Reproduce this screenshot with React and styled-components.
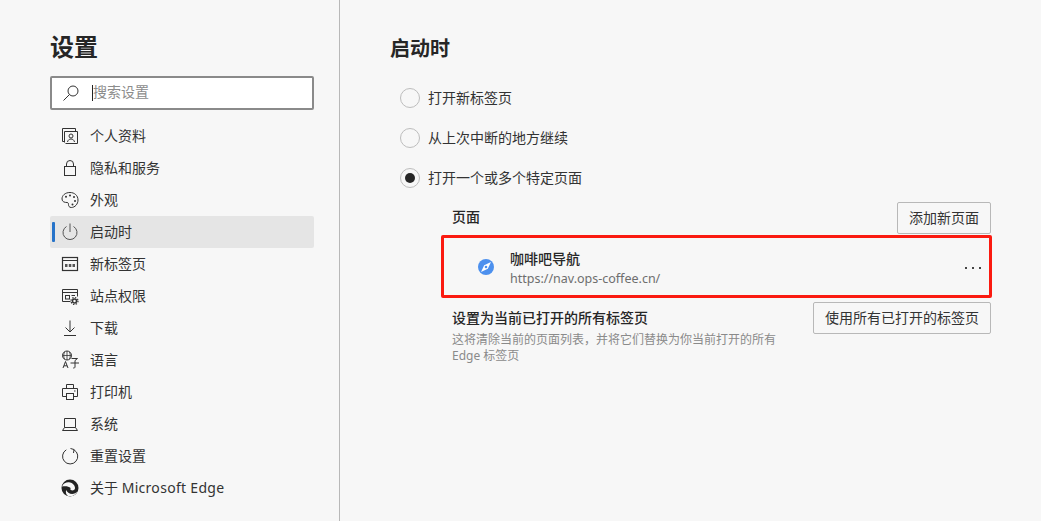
import React from "react";
import styled, { createGlobalStyle } from "styled-components";

const Global = createGlobalStyle`
  html, body { margin: 0; padding: 0; background: #f7f7f7; }
  body { font-family: "Noto Sans", "Noto Sans CJK SC", sans-serif; color: #262626; }
  * { box-sizing: border-box; }
`;
const CJK = `"Noto Sans", "Noto Sans CJK SC", sans-serif`;

const Page = styled.div`
  display: grid; grid-template-columns: 340px 1fr; width: 1041px; height: 521px; overflow: hidden; background: #f7f7f7;
`;
const Sidebar = styled.aside`
  border-right: 1px solid #b8b8b8; padding: 31px 25px 0 50px; height: 521px;
`;
const SideTitle = styled.h1`
  margin: 0; font: 700 24px/32px ${CJK}; color: #262626;
`;
const Search = styled.div`
  margin-top: 13px; height: 34px; border: 2px solid #8a8a8a; border-radius: 2px; background: #fff;
  display: flex; align-items: center; padding-left: 10px;
`;
const Caret = styled.span`
  width: 1px; height: 16px; background: #222; margin-left: 10px;
`;
const Placeholder = styled.span`
  font: 400 14px/20px ${CJK}; color: #8c8c8c; margin-top: -2px;
`;
const Nav = styled.nav` margin-top: 10px; `;
const NavItem = styled.div`
  position: relative; height: 32px; display: flex; align-items: center; padding-left: 10px; gap: 10px;
  border-radius: 2px; background: ${p => (p.$active ? "#e5e5e5" : "transparent")};
  font: 400 14px/20px ${CJK}; color: #333;
`;
const ActiveBar = styled.span`
  position: absolute; left: 2px; top: 6px; width: 3px; height: 20px; background: #2673c9; border-radius: 1px;
`;
const Latin = styled.span` letter-spacing: 0.3px; white-space: pre; `;
const Main = styled.main` padding: 35px 50px 0; `;
const MainTitle = styled.h2` margin: 0; font: 700 20px/28px ${CJK}; color: #262626; `;
const Options = styled.div` margin-top: 15px; padding-left: 10px; `;
const Option = styled.div`
  height: 40px; display: flex; align-items: center; gap: 8px; font: 400 14px/20px ${CJK}; color: #333;
`;
const Radio = styled.span`
  width: 20px; height: 20px; border-radius: 50%; border: 1px solid #bdbdbd; background: #f7f7f7;
  display: flex; align-items: center; justify-content: center;
`;
const Dot = styled.span` width: 10px; height: 10px; border-radius: 50%; background: #262626; `;
const Section = styled.section` margin-top: 4px; padding-left: 62px; `;
const Row = styled.div` display: flex; justify-content: space-between; align-items: ${p => p.$top ? "flex-start" : "center"}; `;
const Label = styled.div` font: 500 14px/20px ${CJK}; color: #262626; `;
const PagesLabel = styled(Label)` margin-top: -2px; `;
const Button = styled.button`
  height: 32px; padding: 0 11px; border: 1px solid #b8b8b8; border-radius: 2px; background: #f7f7f7;
  font: 400 14px/20px ${CJK}; color: #333; white-space: nowrap;
`;
const Highlight = styled.div`
  margin: 1px -1px 4px -11px; height: 63px; border: 3px solid #fb1a10; border-radius: 2px;
  display: flex; align-items: center; padding: 0 8px 0 33px;
`;
const SiteIcon = styled.svg` display: block; margin-top: 1px; flex: none; `;
const SiteText = styled.div` margin-left: 15px; flex: 1; margin-top: 4px; `;
const SiteName = styled.div` font: 500 14px/18px ${CJK}; color: #262626; `;
const SiteUrl = styled.div` font: 400 12.5px/18px ${CJK}; color: #6e6e6e; padding-top: 2px; `;
const More = styled.svg` display: block; margin-top: 2px; `;
const OpenText = styled.div` padding-top: 6px; `;
const Desc = styled.div` margin-top: 4px; width: 336px; font: 400 12px/16px ${CJK}; color: #8a8a8a; `;

const Svg = ({ children }) => (
  <svg width="20" height="20" viewBox="0 0 20 20" fill="none" stroke="#333" strokeWidth="1" style={{ flex: "none" }}>
    {children}
  </svg>
);

const icons = {
  profile: <Svg><path d="M4.5 16.5V5.500H17.500V17.500H5.500" /><path d="M2.500 2.500H15.500V5.500M2.500 2.500V15.500H4.500" /><circle cx="11" cy="10" r="2" /><path d="M7.500 16c.4-2 1.800-3 3.500-3s3.100 1 3.500 3" /></Svg>,
  lock: <Svg><rect x="4.500" y="8.500" width="11" height="9" /><path d="M6.500 8.500V6a3.500 3.500 0 0 1 7 0v2.500" /></Svg>,
  palette: <Svg><path d="M10 2.500C5 2.500 2 5.500 2 9c0 3 3 3.500 5 3.500 1.500 0 1.500 1.200 1.500 2.200 0 1.300 .7 2.800 2.800 2.800C15 17.500 18 14 18 10c0-4.500-3.500-7.500-8-7.500Z" /><g fill="#333" stroke="none"><circle cx="6" cy="6.800" r="1" /><circle cx="10" cy="5.500" r="1" /><circle cx="14" cy="7" r="1" /><circle cx="15" cy="11" r="1" /><circle cx="12.500" cy="14.500" r="1" /></g></Svg>,
  power: <Svg><path d="M6.500 4.500a7 7 0 1 0 7 0" stroke="#555" /><path d="M10 1.500v8.500" stroke="#555" /></Svg>,
  tab: <Svg><rect x="2.500" y="3.500" width="15" height="13" strokeWidth="1.200" /><path d="M2.500 6.500H17.500" /><g fill="#555" stroke="none"><rect x="5" y="10" width="2.500" height="3" /><rect x="8.800" y="10" width="2.500" height="3" /><rect x="12.500" y="10" width="2.500" height="3" /></g></Svg>,
  site: <Svg><path d="M10.500 15.500H2.500V3.500H17.500V10.500" /><path d="M2.500 6.500H17.500" /><rect x="5.500" y="9.500" width="4" height="3.500" /><path d="M11.500 9.500H15" /><circle cx="14.500" cy="15" r="2" strokeWidth="1.500" /><circle cx="14.500" cy="15" r="3.500" strokeDasharray="1.400 1.350" strokeWidth="1.200" /></Svg>,
  download: <Svg><path d="M10 2.500V14M5.500 9.500 10 14l4.500-4.500M4 17.500H16" /></Svg>,
  lang: (
    <Svg>
      <circle cx="7" cy="5.500" r="4.500" /><path d="M2.500 5.500H11.500M7 1V10M4.500 2C3.500 4.500 3.500 7 4.500 9M9.500 2C10.500 4.500 10.500 7 9.500 9" strokeWidth=".8" />
      <path d="M3 18 5.500 11.500 8 18M4 15.800H7" /><path d="M11.500 8.500H17.500L15 10.500V17c0 .8-.5 1-1.800 1M10.500 13H19" />
    </Svg>
  ),
  printer: <Svg><path d="M6.500 6.500V2.500H13.500V6.500" /><path d="M6 14.500H2.500V6.500H17.500V14.500H14" /><rect x="6.500" y="11.500" width="7" height="6" /><path d="M14 9h1.500" /></Svg>,
  laptop: <Svg><path d="M4.500 13.500V4.500H15.500V13.500" /><path d="M2.500 16.500 4.500 13.500H15.500L17.500 16.500Z" /></Svg>,
  reset: <Svg><path d="M6.300 3.800a7.600 7.600 0 1 0 7.700 0" /><path d="M10.500 2.500 14 3.500 13.500 7" /></Svg>,
  edge: (
    <svg width="20" height="20" viewBox="0 0 20 20" style={{ flex: "none" }}>
      <circle cx="10" cy="10" r="8.500" fill="#222" />
      <path d="M2 8.500C3.500 5 7 3.800 10 4.500c3 .7 5.200 3.200 5 5.800-.1 1.700-2 2.500-3.500 2-1.300-.4-1.400-1.500-.8-2.300C8.500 7.800 4.500 8 2 8.500Z" fill="#f7f7f7" />
      <path d="M8 18c-2-1.500-2.700-4-1.700-6 .6 2.500 4 4.500 7.500 3.800 1.300-.3 2.400-1 3.200-2-1 3.200-5.500 5.500-9 4.200Z" fill="#f7f7f7" />
    </svg>
  ),
};

const items = [
  ["profile", "个人资料"], ["lock", "隐私和服务"], ["palette", "外观"], ["power", "启动时", true],
  ["tab", "新标签页"], ["site", "站点权限"], ["download", "下载"], ["lang", "语言"],
  ["printer", "打印机"], ["laptop", "系统"], ["reset", "重置设置"],
  ["edge", <span key="about">关于 <Latin>Microsoft Edge</Latin></span>],
];

export default function App() {
  return (
    <>
      <Global />
      <Page>
        <Sidebar>
          <SideTitle>设置</SideTitle>
          <Search>
            <svg width="20" height="20" viewBox="0 0 20 20" fill="none" stroke="#333" strokeWidth="1">
              <circle cx="11" cy="8" r="5" /><path d="M7.500 11.500 1.500 17.500" />
            </svg>
            <Caret />
            <Placeholder>搜索设置</Placeholder>
          </Search>
          <Nav>
            {items.map(([icon, label, active]) => (
              <NavItem key={icon} $active={active}>
                {active && <ActiveBar />}
                {icons[icon]}
                {label}
              </NavItem>
            ))}
          </Nav>
        </Sidebar>
        <Main>
          <MainTitle>启动时</MainTitle>
          <Options>
            <Option><Radio />打开新标签页</Option>
            <Option><Radio />从上次中断的地方继续</Option>
            <Option><Radio><Dot /></Radio>打开一个或多个特定页面</Option>
          </Options>
          <Section>
            <Row>
              <PagesLabel>页面</PagesLabel>
              <Button>添加新页面</Button>
            </Row>
            <Highlight>
              <SiteIcon width="18" height="18" viewBox="0 0 18 18">
                <circle cx="9" cy="9" r="8" fill="#4c90ee" />
                <path d="M14 4 10.800 10.800 4 14 7.200 7.200Z" fill="#fff" />
                <circle cx="9" cy="9" r="1.300" fill="#4c90ee" />
              </SiteIcon>
              <SiteText>
                <SiteName>咖啡吧导航</SiteName>
                <SiteUrl>https://nav.ops-coffee.cn/</SiteUrl>
              </SiteText>
              <More width="16" height="2" viewBox="0 0 16 2" fill="#444">
                <rect x="0" y="0" width="2" height="2" /><rect x="7" y="0" width="2" height="2" /><rect x="14" y="0" width="2" height="2" />
              </More>
            </Highlight>
            <Row $top>
              <OpenText>
                <Label>设置为当前已打开的所有标签页</Label>
                <Desc>这将清除当前的页面列表，并将它们替换为你当前打开的所有 Edge 标签页</Desc>
              </OpenText>
              <Button>使用所有已打开的标签页</Button>
            </Row>
          </Section>
        </Main>
      </Page>
    </>
  );
}
